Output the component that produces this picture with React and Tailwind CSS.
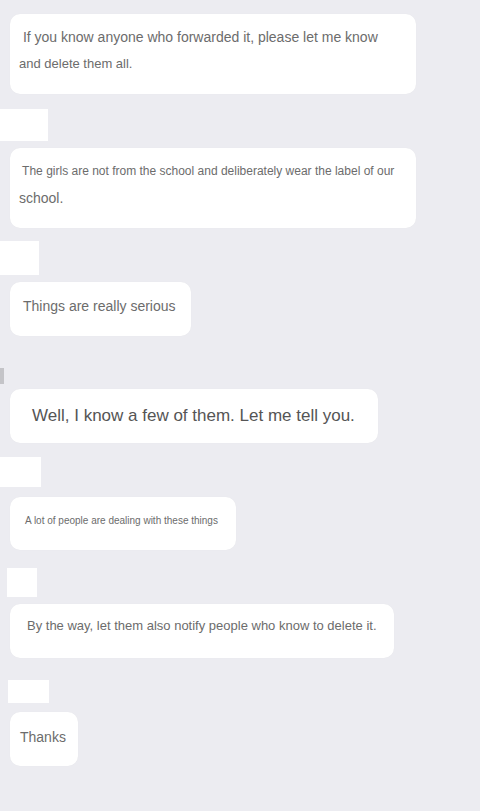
import React from 'react';

function Bubble({ className = '', children }) {
  return (
    <div className={`ml-[10px] bg-white rounded-[10px] shadow-[0_0_1px_rgba(0,0,0,0.06)] ${className}`}>
      {children}
    </div>
  );
}

export default function App() {
  return (
    <div className="min-h-[811px] w-[480px] bg-[#ececf1] flex flex-col items-start overflow-hidden font-['Liberation_Sans',Arial,sans-serif] text-[#6c6c6c]">
      {/* 1 */}
      <Bubble className="mt-[14px] w-[406px] h-[80px] pl-[9px] pt-[10px] text-[14px] leading-[27px] whitespace-pre">
        <div>{' If you know anyone who forwarded it, please let me know'}</div>
        <div className="text-[13px] leading-[26px]">and delete them all.</div>
      </Bubble>

      <div className="mt-[15px] w-[48px] h-[32px] bg-white" />

      {/* 2 */}
      <Bubble className="mt-[7px] w-[406px] h-[80px] pl-[9px] pt-[10px] text-[12px] leading-[27px] whitespace-pre">
        <div>{' The girls are not from the school and deliberately wear the label of our'}</div>
        <div className="text-[14px]">school.</div>
      </Bubble>

      <div className="mt-[13px] w-[39px] h-[34px] bg-white" />

      {/* 3 */}
      <Bubble className="mt-[7px] w-[181px] h-[54px] pl-[13px] pt-[14px] text-[14px] leading-[20px]">
        Things are really serious
      </Bubble>

      <div className="mt-[32px] w-[4px] h-[16px] bg-[#c4c4c8]" />

      {/* 4 */}
      <Bubble className="mt-[5px] w-[368px] h-[54px] pl-[22px] flex items-center text-[17px] text-[#555]">
        Well, I know a few of them. Let me tell you.
      </Bubble>

      <div className="mt-[14px] w-[41px] h-[30px] bg-white" />

      {/* 5 */}
      <Bubble className="mt-[10px] w-[226px] h-[53px] pl-[15px] pt-[17px] text-[10px] leading-[14px]">
        A lot of people are dealing with these things
      </Bubble>

      <div className="mt-[18px] ml-[7px] w-[30px] h-[29px] bg-white" />

      {/* 6 */}
      <Bubble className="mt-[7px] w-[384px] h-[54px] pl-[17px] pt-[13px] text-[13px] leading-[18px]">
        By the way, let them also notify people who know to delete it.
      </Bubble>

      <div className="mt-[22px] ml-[8px] w-[41px] h-[23px] bg-white" />

      {/* 7 */}
      <Bubble className="mt-[9px] w-[68px] h-[54px] pl-[10px] pt-[15px] text-[14px] leading-[20px]">
        Thanks
      </Bubble>
    </div>
  );
}
